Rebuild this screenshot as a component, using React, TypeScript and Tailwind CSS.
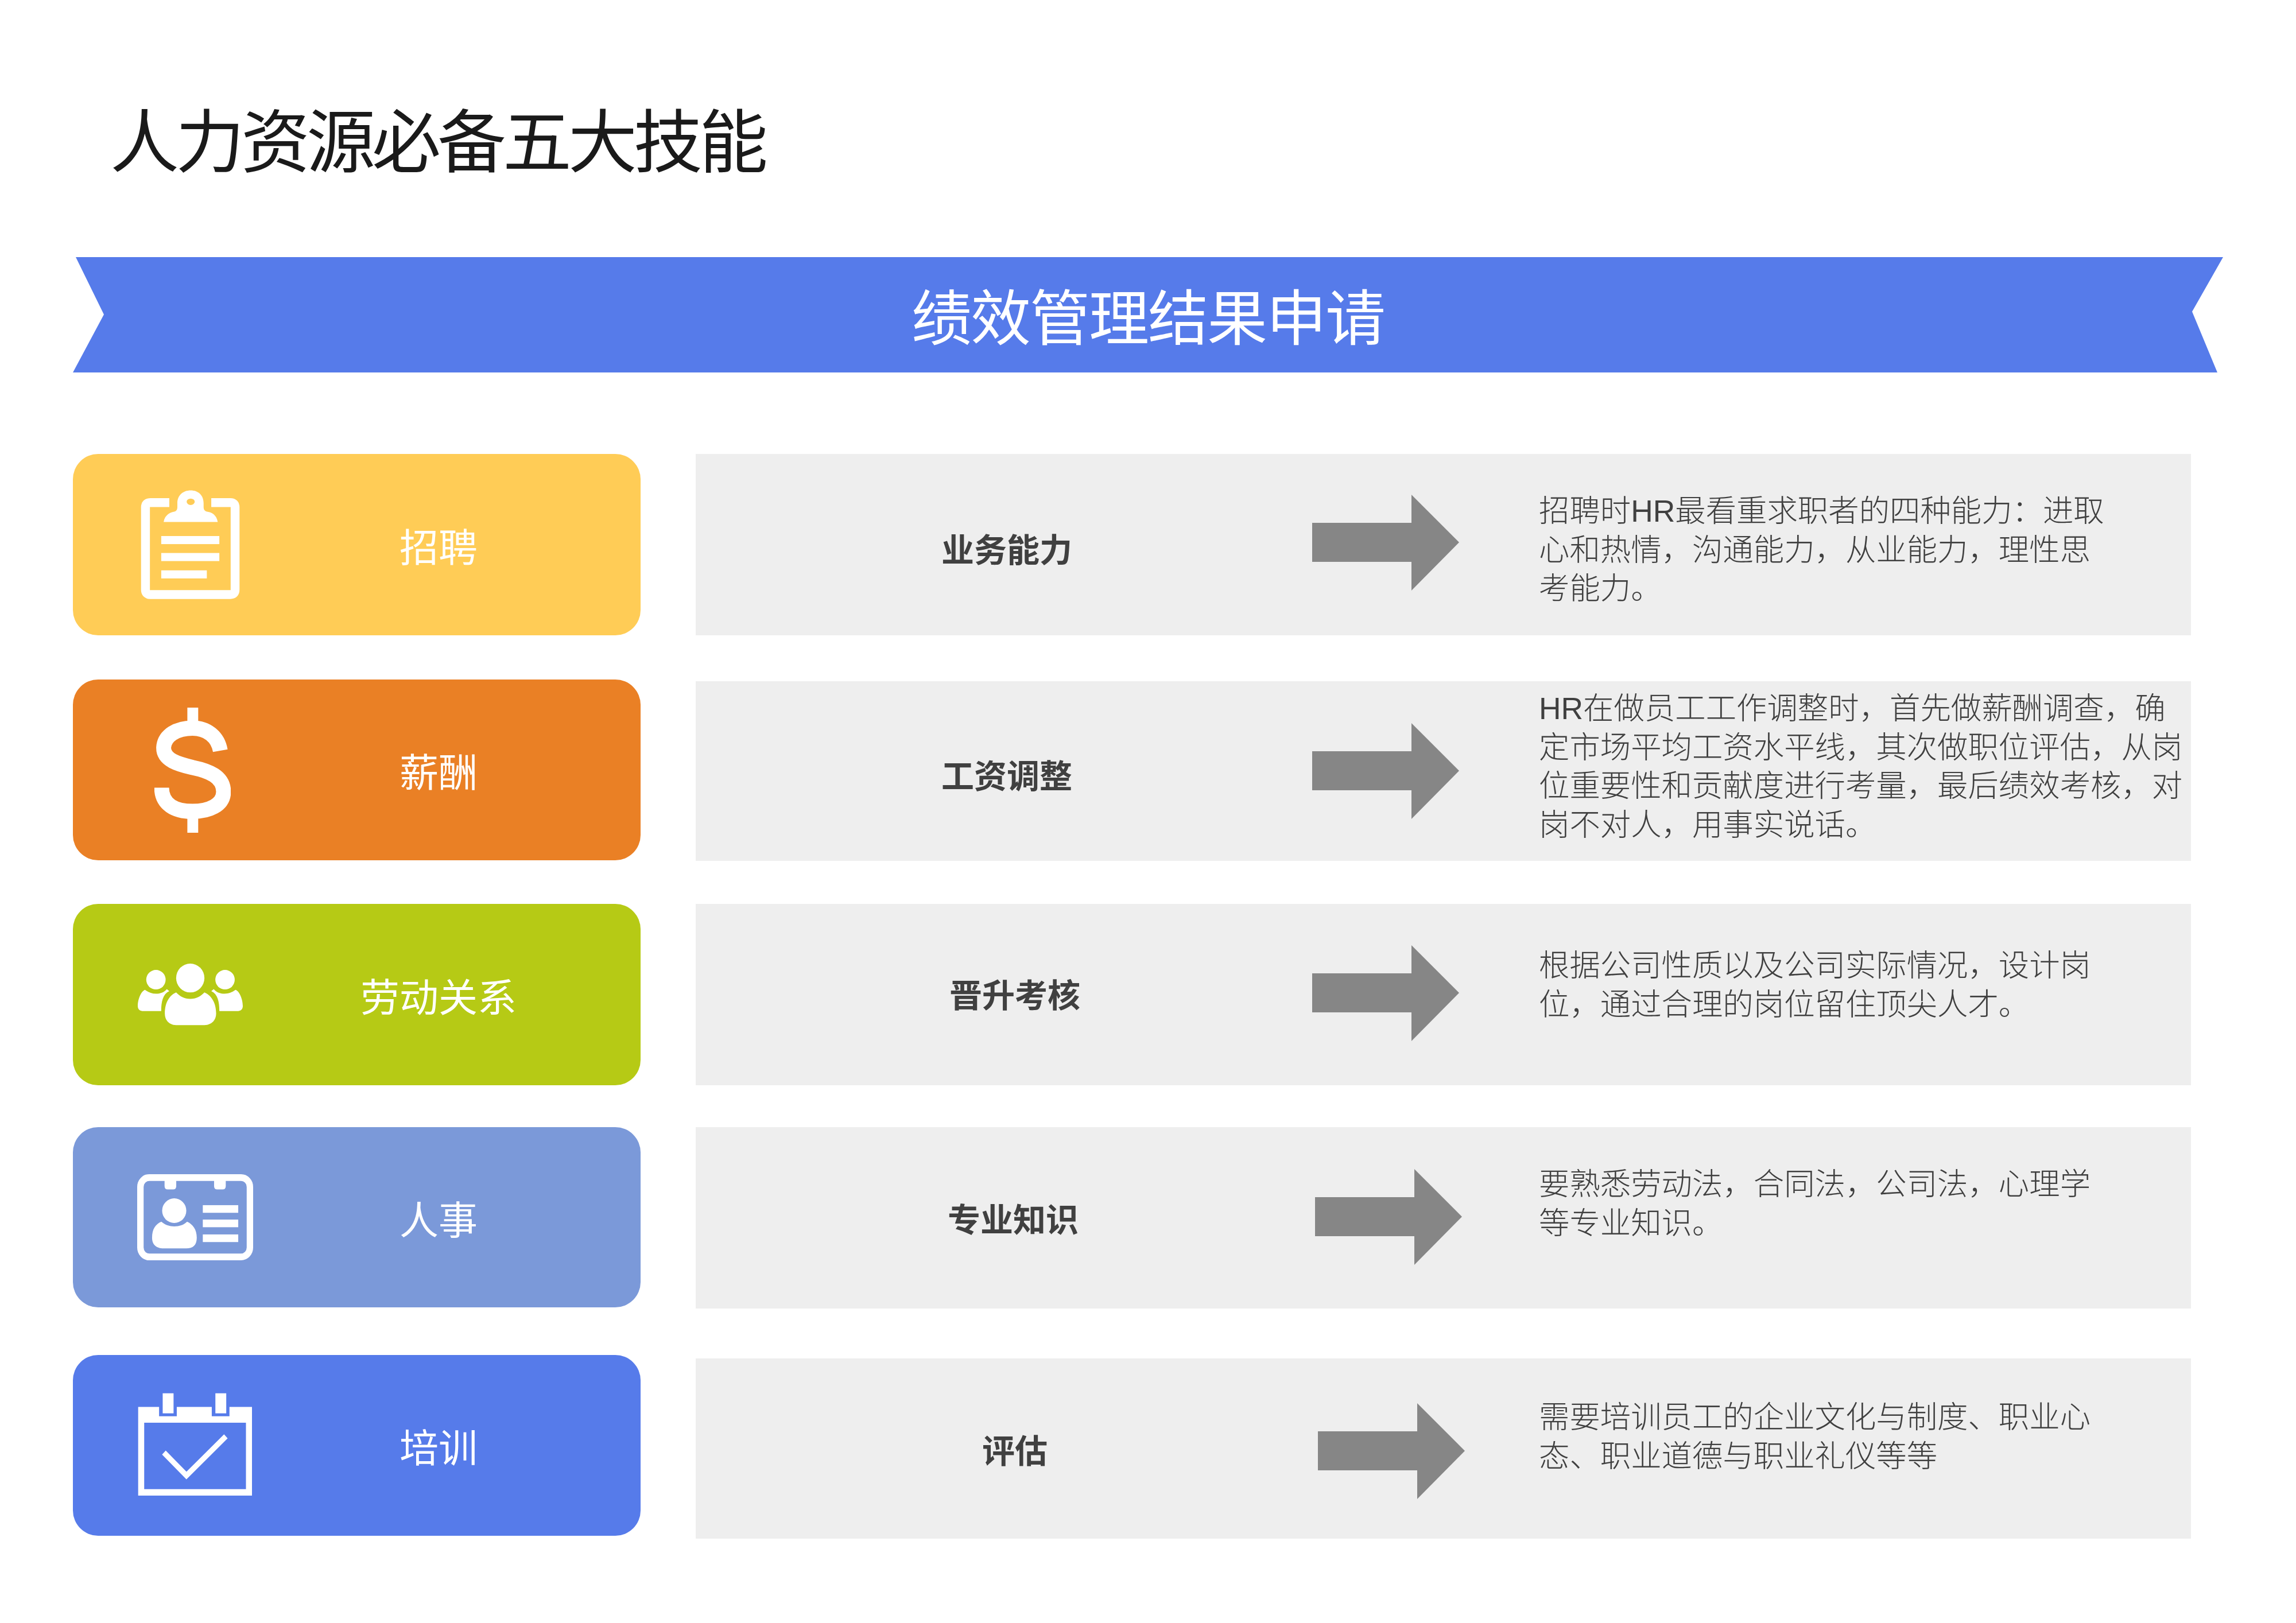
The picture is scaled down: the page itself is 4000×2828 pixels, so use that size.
const FONT = "font-['Liberation_Sans','Noto_Sans_CJK_SC',sans-serif]";

function ClipboardIcon() {
  return (
    <svg viewBox="0 0 246 270" className="w-[173px] h-[193px]" fill="#fff">
      <path d="M71 30H24Q12 30 12 42V246Q12 258 24 258H222Q234 258 234 246V42Q234 30 222 30H175" fill="none" stroke="#fff" strokeWidth="22" />
      <path
        fillRule="evenodd"
        d="M57 78C60 60 75 54 82 53Q91 52 91 42V32C91 12 105 0 124 0C143 0 156 12 156 32V42Q156 52 166 53C175 54 188 60 191 78ZM114 28A10 8 0 0 0 134 28A10 8 0 0 0 114 28Z"
      />
      <rect x="51" y="113" width="144" height="20" />
      <rect x="51" y="155" width="144" height="20" />
      <rect x="51" y="198" width="113" height="20" />
    </svg>
  );
}

function DollarIcon() {
  return (
    <svg viewBox="0 0 190 305" preserveAspectRatio="none" className="w-[133px] h-[218px] ml-[8px]" fill="#fff">
      <path
        d="M164 105C158 70 130 50 95 50C55 50 25 68 23 97C22 128 60 138 95 146C135 154 172 168 172 205C172 238 135 253 95 253C50 253 18 235 18 195"
        fill="none"
        stroke="#fff"
        strokeWidth="37"
      />
      <rect x="82" y="0" width="27" height="36" />
      <rect x="82" y="268" width="27" height="37" />
    </svg>
  );
}

function PeopleIcon() {
  return (
    <svg viewBox="0 0 260 146" preserveAspectRatio="none" className="w-[183px] h-[108px]" fill="#fff">
      <ellipse cx="130" cy="34" rx="35" ry="34" />
      <path d="M95 68C80 74 67 90 67 118C67 135 80 145 95 145H165C180 145 194 135 194 118C194 90 180 74 165 68C155 78 145 83 130 83C115 83 105 78 95 68Z" />
      <ellipse cx="45" cy="38" rx="24" ry="23" />
      <ellipse cx="216" cy="38" rx="24" ry="23" />
      <path d="M18 62C8 65 0 85 0 100C0 108 6 112 14 112H58C58 90 62 72 78 65L72 60C65 68 55 71 45 71C35 71 27 68 18 62Z" />
      <path d="M242 62C252 65 260 85 260 100C260 108 254 112 246 112H202C202 90 198 72 182 65L188 60C195 68 205 71 215 71C225 71 233 68 242 62Z" />
    </svg>
  );
}

function IdCardIcon() {
  return (
    <svg viewBox="0 0 288 203" preserveAspectRatio="none" className="w-[202px] h-[150px]" fill="#fff">
      <rect x="8" y="8" width="272" height="187" rx="22" fill="none" stroke="#fff" strokeWidth="16" />
      <path d="M68 14H97V28Q97 36 89 36H76Q68 36 68 28Z" />
      <path d="M191 14H220V28Q220 36 212 36H199Q191 36 191 28Z" />
      <ellipse cx="92" cy="86" rx="30" ry="29" />
      <path d="M60 112C45 118 37 130 37 150C37 168 50 175 65 175H122C138 175 148 168 148 150C148 130 138 118 124 112C115 120 105 123 92 123C80 123 70 120 60 112Z" />
      <rect x="163" y="73" width="88" height="18" />
      <rect x="163" y="107" width="88" height="18" />
      <rect x="163" y="142" width="88" height="18" />
    </svg>
  );
}

function CalendarIcon() {
  return (
    <svg viewBox="0 0 284 241" preserveAspectRatio="none" className="w-[199px] h-[179px]" fill="#fff">
      <path fillRule="evenodd" d="M1 33H53V55H97V33H184V55H228V33H284V241H1ZM16 70V226H269V70Z" />
      <rect x="62" y="1" width="27" height="47" />
      <rect x="193" y="1" width="27" height="47" />
      <path d="M65 140L121 194L219 102" fill="none" stroke="#fff" strokeWidth="13" />
    </svg>
  );
}

function Arrow() {
  return (
    <svg viewBox="0 0 256 167" preserveAspectRatio="none" className="w-[256px] h-[167px] shrink-0" fill="#868686">
      <path d="M0 49H173V0L256 83L173 167V117H0Z" />
    </svg>
  );
}

const rows = [
  {
    row: "",
    card: "h-[316px] bg-[#ffcc56]",
    icon: <ClipboardIcon />,
    iconBox: "",
    title: "招聘",
    panel: "h-[316px]",
    name: "业务能力",
    nameBox: "w-[1074px] pl-[10px] mt-[20px]",
    arrowBox: "mb-[8px]",
    lines: ["招聘时HR最看重求职者的四种能力：进取", "心和热情，沟通能力，从业能力，理性思", "考能力。"],
    desc: "pt-[66px]",
  },
  {
    row: "mt-[77px]",
    card: "h-[315px] bg-[#ea8025]",
    icon: <DollarIcon />,
    iconBox: "",
    title: "薪酬",
    panel: "h-[313px] mt-[3px]",
    name: "工资调整",
    nameBox: "w-[1074px] pl-[10px] mt-[20px]",
    arrowBox: "",
    lines: ["HR在做员工工作调整时，首先做薪酬调查，确", "定市场平均工资水平线，其次做职位评估，从岗", "位重要性和贡献度进行考量，最后绩效考核，对", "岗不对人，用事实说话。"],
    desc: "pt-[14px]",
  },
  {
    row: "mt-[75px]",
    card: "h-[316px] bg-[#b6ca15]",
    icon: <PeopleIcon />,
    iconBox: "",
    title: "劳动关系",
    panel: "h-[316px]",
    name: "晋升考核",
    nameBox: "w-[1074px] pl-[38px] mt-[4px]",
    arrowBox: "mb-[6px]",
    lines: ["根据公司性质以及公司实际情况，设计岗", "位，通过合理的岗位留住顶尖人才。"],
    desc: "pt-[74px]",
  },
  {
    row: "mt-[73px]",
    card: "h-[314px] bg-[#7b99d9]",
    icon: <IdCardIcon />,
    iconBox: "ml-[18px]",
    title: "人事",
    panel: "h-[316px]",
    name: "专业知识",
    nameBox: "w-[1079px] pl-[27px] mt-[8px]",
    arrowBox: "mb-[4px]",
    lines: ["要熟悉劳动法，合同法，公司法，心理学", "等专业知识。"],
    desc: "pt-[66px]",
  },
  {
    row: "mt-[81px]",
    card: "h-[315px] bg-[#567bea]",
    icon: <CalendarIcon />,
    iconBox: "ml-[16px] mb-[4px]",
    title: "培训",
    panel: "h-[314px] mt-[6px]",
    name: "评估",
    nameBox: "w-[1084px] pl-[28px] mt-[10px]",
    arrowBox: "mt-[8px]",
    lines: ["需要培训员工的企业文化与制度、职业心", "态、职业道德与职业礼仪等等"],
    desc: "pt-[69px]",
  },
];

export default function App() {
  return (
    <div className={`w-[4000px] h-[2828px] bg-white overflow-hidden ${FONT}`}>
      <div className="h-[448px] pl-[192px] pt-[190px]">
        <h1 className="text-[120px] leading-[118px] tracking-[-6px] font-normal text-[#1a1a1a]">人力资源必备五大技能</h1>
      </div>

      {/* banner */}
      <div className="ml-[127px] w-[3746px] h-[201px] bg-[#567bea] flex items-center justify-center [clip-path:polygon(5px_0,3746px_0,3692px_95px,3736px_201px,0_201px,54px_100px)]">
        <span className="mt-[14px] text-[105px] leading-none tracking-[-2px] text-white font-normal">绩效管理结果申请</span>
      </div>

      <div className="mt-[142px] pl-[127px]">
        {rows.map((r) => (
          <div key={r.title} className={`flex items-start ${r.row}`}>
            {/* LEFT */}
            <div className={`w-[989px] shrink-0 rounded-[44px] flex items-center ${r.card}`}>
              <div className="w-[408px] flex items-center justify-center">
                <div className={`flex items-center justify-center ${r.iconBox}`}>{r.icon}</div>
              </div>
              <div className="w-[458px] mt-[11px] text-center text-[68px] leading-none text-white font-normal">{r.title}</div>
            </div>

            {/* RIGHT */}
            <div className={`ml-[96px] w-[2605px] bg-[#eeeeee] flex items-center ${r.panel}`}>
              <div className={`shrink-0 text-center text-[57px] leading-none font-bold text-[#404040] ${r.nameBox}`}>{r.name}</div>
              <div className={r.arrowBox}>
                <Arrow />
              </div>
              <div className={`ml-auto w-[1136px] self-stretch text-[53.4px] leading-[67.5px] font-light text-[#404040] ${r.desc}`}>
                {r.lines.map((line) => (
                  <div key={line} className="whitespace-nowrap">
                    {line}
                  </div>
                ))}
              </div>
            </div>
          </div>
        ))}
      </div>
    </div>
  );
}
